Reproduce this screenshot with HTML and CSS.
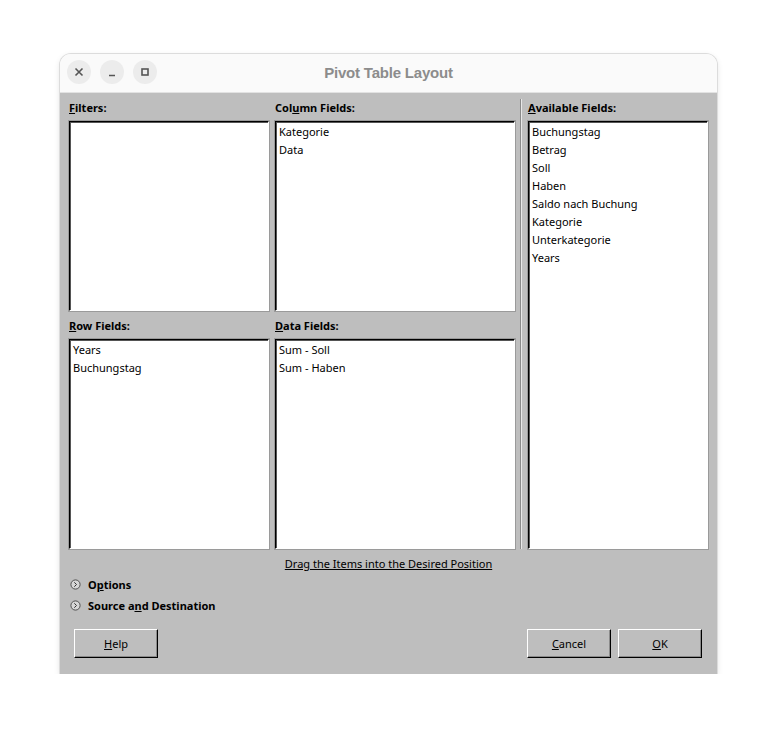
FILE: index.html
```html
<!DOCTYPE html>
<html>
<head>
<meta charset="utf-8">
<link rel="stylesheet" href="styles.css">
</head>
<body>
<div class="window">
  <div class="titlebar">
    <div class="wbtns">
      <span class="wbtn"><svg width="10" height="10" viewBox="0 0 10 10"><path d="M1.5 1.5L8.5 8.5M8.5 1.5L1.5 8.5" stroke="#555" stroke-width="1.6"/></svg></span>
      <span class="wbtn"><svg width="10" height="10" viewBox="0 0 10 10"><path d="M2 8.5H8" stroke="#555" stroke-width="1.6"/></svg></span>
      <span class="wbtn"><svg width="10" height="10" viewBox="0 0 10 10"><rect x="2" y="2" width="6" height="6" fill="none" stroke="#555" stroke-width="1.6"/></svg></span>
    </div>
    <div class="title">Pivot Table Layout</div>
  </div>
  <div class="body">
    <div class="grid">
      <div class="lbl l-filters"><u>F</u>ilters:</div>
      <div class="lbl l-col">Col<u>u</u>mn Fields:</div>
      <div class="sep"></div>
      <div class="lbl l-avail"><u>A</u>vailable Fields:</div>
      <div class="box b-filters"></div>
      <div class="box b-col"><div class="item">Kategorie</div><div class="item">Data</div></div>
      <div class="box b-avail">
        <div class="item">Buchungstag</div>
        <div class="item">Betrag</div>
        <div class="item">Soll</div>
        <div class="item">Haben</div>
        <div class="item">Saldo nach Buchung</div>
        <div class="item">Kategorie</div>
        <div class="item">Unterkategorie</div>
        <div class="item">Years</div>
      </div>
      <div class="lbl l-row"><u>R</u>ow Fields:</div>
      <div class="lbl l-data"><u>D</u>ata Fields:</div>
      <div class="box b-row"><div class="item">Years</div><div class="item">Buchungstag</div></div>
      <div class="box b-data"><div class="item">Sum - Soll</div><div class="item">Sum - Haben</div></div>
    </div>
    <div class="hint"><span>Drag the Items into the Desired Position</span></div>
    <div class="exp first"><span class="chev"><svg width="11" height="11" viewBox="0 0 11 11"><circle cx="5.5" cy="5.5" r="4.6" fill="#d6d6d6" stroke="#444" stroke-width="0.9"/><path d="M4.3 3.3L6.5 5.5L4.3 7.7" fill="none" stroke="#333" stroke-width="1"/></svg></span><b>O<u>p</u>tions</b></div>
    <div class="exp"><span class="chev"><svg width="11" height="11" viewBox="0 0 11 11"><circle cx="5.5" cy="5.5" r="4.6" fill="#d6d6d6" stroke="#444" stroke-width="0.9"/><path d="M4.3 3.3L6.5 5.5L4.3 7.7" fill="none" stroke="#333" stroke-width="1"/></svg></span><b>Source a<u>n</u>d Destination</b></div>
    <div class="buttons">
      <button class="btn"><u>H</u>elp</button>
      <div class="spacer"></div>
      <button class="btn"><u>C</u>ancel</button>
      <button class="btn"><u>O</u>K</button>
    </div>
  </div>
</div>
</body>
</html>
```
FILE: styles.css
```css
html, body {
  margin: 0;
  padding: 0;
  background: #ffffff;
}
body {
  font-family: "Noto Sans", "DejaVu Sans", sans-serif;
  font-size: 11px;
  color: #000;
}
.window {
  margin-left: 60px;
  margin-top: 54px;
  width: 657px;
  border-radius: 11px 11px 0 0;
  box-shadow: 0 0 0 1px #dcdcdc, 0 2px 6px rgba(0,0,0,0.12);
  overflow: hidden;
}
.titlebar {
  height: 38px;
  background: #fafafa;
  border-bottom: 1px solid #e2e2e2;
  position: relative;
  display: flex;
  align-items: center;
  justify-content: center;
}
.wbtns {
  position: absolute;
  left: 7px;
  top: 6px;
  display: flex;
  gap: 9px;
}
.wbtn {
  width: 24px;
  height: 24px;
  border-radius: 50%;
  background: #ececec;
  display: flex;
  align-items: center;
  justify-content: center;
}
.title {
  font-family: "Liberation Sans", Arial, sans-serif;
  font-weight: bold;
  font-size: 15px;
  color: #8c8c8c;
  letter-spacing: -0.2px;
  margin-top: -1px;
}
.body {
  background: #bebebe;
  padding: 0 9px 16px 9px;
}
.grid {
  display: grid;
  grid-template-columns: 200px 246px 13px 180px;
  column-gap: 0;
  grid-template-rows: 28px 190px 28px 210px;
}
.lbl {
  font-weight: bold;
  line-height: 28px;
  height: 28px;
  padding-top: 1px;
  box-sizing: border-box;
}
.l-filters { grid-column: 1; grid-row: 1; }
.l-col { grid-column: 2; grid-row: 1; margin-left: 6px; }
.l-avail { grid-column: 4; grid-row: 1; }
.l-row { grid-column: 1; grid-row: 3; }
.l-data { grid-column: 2; grid-row: 3; margin-left: 6px; }
.sep {
  grid-column: 3;
  grid-row: 1 / 5;
  margin: 6px 0 0 5px;
  width: 1px;
  background: #8a8a8a;
  border-right: 1px solid #e8e8e8;
}
.box {
  background: #fff;
  border-top: 1px solid #000;
  border-left: 1px solid #000;
  border-right: 1px solid #fff;
  border-bottom: 1px solid #fff;
  box-shadow: inset 1px 1px 0 #555;
  outline: 1px solid #9a9a9a;
  padding: 1px 3px 0 3px;
  box-sizing: border-box;
}
.b-filters { grid-column: 1; grid-row: 2; }
.b-col { grid-column: 2; grid-row: 2; margin-left: 6px; }
.b-avail { grid-column: 4; grid-row: 2 / 5; }
.b-row { grid-column: 1; grid-row: 4; }
.b-data { grid-column: 2; grid-row: 4; margin-left: 6px; }
.item {
  line-height: 18px;
  white-space: nowrap;
}
.hint {
  text-align: center;
  padding-top: 8px;
  line-height: 14px;
  height: 14px;
}
.hint span {
  text-decoration: underline;
}
.exp {
  display: flex;
  align-items: center;
  height: 21px;
  line-height: 21px;
}
.exp.first { margin-top: 3px; }
.chev {
  display: inline-flex;
  width: 18px;
  padding-left: 1px;
}
.buttons {
  display: flex;
  margin-top: 13px;
  padding: 0 6px 0 5px;
  gap: 7px;
}
.spacer { flex: 1; }
.btn {
  width: 84px;
  height: 29px;
  box-sizing: border-box;
  background: #bebebe;
  border-top: 1px solid #fff;
  border-left: 1px solid #fff;
  border-right: 1px solid #000;
  border-bottom: 1px solid #000;
  box-shadow: inset -1px -1px 0 #8a8a8a;
  font-family: "Noto Sans", "DejaVu Sans", sans-serif;
  font-size: 11px;
  color: #000;
  padding: 0;
}
```
